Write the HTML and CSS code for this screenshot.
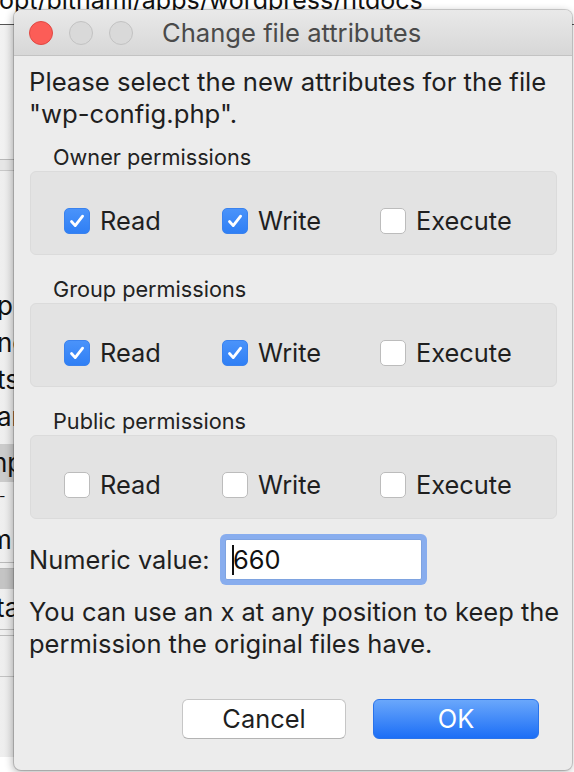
FILE: index.html
```html
<!DOCTYPE html>
<html>
<head>
<meta charset="utf-8">
<link rel="stylesheet" href="styles.css">
</head>
<body>
<div class="desktop">
  <div class="bgwin">
    <div class="bgpath">opt/bitnami/apps/wordpress/htdocs</div>
    <div class="bgside">
      <div class="sb-top"></div>
      <div class="sb-sep"></div>
      <div class="sb-gap"></div>
      <div class="sb-row">php</div>
      <div class="sb-row">nclude</div>
      <div class="sb-row">ts</div>
      <div class="sb-row sb-ar">ar</div>
      <div class="sb-row sb-sel">np</div>
      <div class="sb-row sb-tick">-</div>
      <div class="sb-row sb-m">m</div>
      <div class="sb-lines"></div>
      <div class="sb-band"></div>
      <div class="sb-row sb-ta">ta</div>
      <div class="sb-lines2"></div>
      <div class="sb-bottom"></div>
    </div>
  </div>

  <div class="dialog">
    <div class="titlebar">
      <span class="light red"></span>
      <span class="light"></span>
      <span class="light"></span>
      <span class="title">Change file attributes</span>
    </div>
    <div class="content">
      <p class="intro">Please select the new attributes for the file<br>"wp-config.php".</p>

      <div class="group">
        <div class="glabel">Owner permissions</div>
        <div class="gbox">
          <label class="check"><span class="cb on"><svg viewBox="0 0 26 26"><path d="M7.5 13.5 L11.2 17.6 L18.6 8.2"/></svg></span>Read</label>
          <label class="check"><span class="cb on"><svg viewBox="0 0 26 26"><path d="M7.5 13.5 L11.2 17.6 L18.6 8.2"/></svg></span>Write</label>
          <label class="check"><span class="cb"></span>Execute</label>
        </div>
      </div>

      <div class="group">
        <div class="glabel">Group permissions</div>
        <div class="gbox">
          <label class="check"><span class="cb on"><svg viewBox="0 0 26 26"><path d="M7.5 13.5 L11.2 17.6 L18.6 8.2"/></svg></span>Read</label>
          <label class="check"><span class="cb on"><svg viewBox="0 0 26 26"><path d="M7.5 13.5 L11.2 17.6 L18.6 8.2"/></svg></span>Write</label>
          <label class="check"><span class="cb"></span>Execute</label>
        </div>
      </div>

      <div class="group last">
        <div class="glabel">Public permissions</div>
        <div class="gbox">
          <label class="check"><span class="cb"></span>Read</label>
          <label class="check"><span class="cb"></span>Write</label>
          <label class="check"><span class="cb"></span>Execute</label>
        </div>
      </div>

      <div class="numeric">
        <span class="nlabel">Numeric value:</span>
        <div class="field"><span class="caret"></span>660</div>
      </div>

      <p class="hint">You can use an x at any position to keep the<br>permission the original files have.</p>

      <div class="buttons">
        <div class="btn cancel">Cancel</div>
        <div class="btn ok">OK</div>
      </div>
    </div>
  </div>
</div>
</body>
</html>
```

FILE: styles.css
```css
html, body {
  margin: 0;
  padding: 0;
}
body {
  width: 574px;
  height: 772px;
  overflow: hidden;
  background: #fff;
  font-family: Inter, "Noto Sans", "Liberation Sans", sans-serif;
  color: #1f1f1f;
}
.desktop {
  position: relative;
  width: 574px;
  height: 772px;
  overflow: hidden;
}

/* background window */
.bgwin {
  position: absolute;
  left: 0;
  top: 0;
  width: 574px;
  height: 772px;
}
.bgpath {
  height: 25px;
  box-sizing: border-box;
  border-bottom: 1px solid #555;
  font-size: 25px;
  line-height: 0;
  white-space: nowrap;
  color: #111;
  text-indent: -1px;
}
.bgside {
  width: 60px;
  display: flex;
  flex-direction: column;
  background: linear-gradient(to right, #efefef, #dedede);
}
.sb-top { height: 134px; background: linear-gradient(to right, #f2f2f2, #e0e0e0); }
.sb-sep { height: 10px; border-top: 1px solid #b8b8b8; border-bottom: 1px solid #c8c8c8; background: #e6e6e6; }
.sb-gap { height: 116px; }
.sb-row {
  height: 37px;
  font-size: 26px;
  line-height: 37px;
  color: #111;
  white-space: nowrap;
  text-indent: -3px;
}
.sb-ar { height: 47px; line-height: 40px; margin-top: -1px; }
.sb-sel { height: 38px; line-height: 38px; background: #cbcbcb; text-indent: -8px; }
.sb-tick { height: 35px; line-height: 28px; font-size: 14px; text-indent: -1px; }
.sb-m { height: 45px; line-height: 45px; text-indent: -11px; }
.sb-lines { height: 5px; border-top: 1px solid #b9b9b9; border-bottom: 1px solid #b9b9b9; }
.sb-band { height: 20px; background: #c4c4c4; }
.sb-ta { height: 40px; line-height: 38px; text-indent: -4px; }
.sb-lines2 { height: 5px; border-top: 1px solid #bbb; border-bottom: 1px solid #bbb; margin-bottom: 40px; }
.sb-bottom { height: 80px; border-top: 1px solid #c2c2c2; }

/* dialog */
.dialog {
  position: absolute;
  left: 14px;
  top: 10px;
  width: 558px;
  height: 760px;
  background: #ececec;
  border-radius: 7px;
  box-shadow: 0 0 0 1px rgba(0,0,0,0.16), -1px 2px 8px rgba(0,0,0,0.32);
  display: flex;
  flex-direction: column;
  overflow: hidden;
}
.titlebar {
  flex: none;
  height: 46px;
  box-sizing: border-box;
  background: linear-gradient(#e9e9e9, #d7d7d7);
  border-bottom: 1px solid #c3c3c3;
  display: flex;
  align-items: center;
  padding-left: 15px;
}
.light {
  width: 22px;
  height: 22px;
  border-radius: 50%;
  background: #d9d9d9;
  border: 1px solid #c2c2c2;
  margin-right: 16px;
  flex: none;
}
.light.red {
  background: #fc5d57;
  border-color: #e04843;
}
.title {
  margin-left: 13px;
  font-size: 25.6px;
  color: #4a4a4a;
  white-space: nowrap;
}
.content {
  padding: 10px 15px 0 16px;
}
.intro {
  margin: 0 0 14px -1px;
  font-size: 25.7px;
  line-height: 32px;
  white-space: nowrap;
}
.group {
  margin-bottom: 21px;
}
.group.last {
  margin-bottom: 0;
}
.glabel {
  padding-left: 23px;
  font-size: 21.7px;
  line-height: 26px;
  height: 26px;
  color: #222;
}
.gbox {
  margin-top: 1px;
  height: 84px;
  box-sizing: border-box;
  background: #e3e3e3;
  border: 1px solid #dbdbdb;
  border-radius: 6px;
  padding: 36px 0 0 33px;
  display: grid;
  grid-template-columns: 158px 158px 158px;
  align-items: start;
}
.check {
  display: flex;
  align-items: center;
  gap: 10px;
  font-size: 25.4px;
  line-height: 26px;
  height: 26px;
  color: #1f1f1f;
}
.cb {
  width: 26px;
  height: 26px;
  box-sizing: border-box;
  border-radius: 5px;
  background: #fff;
  border: 1px solid #bcbcbc;
  flex: none;
  display: flex;
}
.cb.on {
  background: linear-gradient(#4a93fa, #2f7ff5);
  border-color: #3a82ee;
}
.cb svg {
  width: 26px;
  height: 26px;
  margin: -1px;
}
.cb svg path {
  fill: none;
  stroke: #fff;
  stroke-width: 2.8;
  stroke-linecap: round;
  stroke-linejoin: round;
}
.numeric {
  margin-top: 20px;
  display: grid;
  grid-template-columns: 195px 197px;
  align-items: center;
}
.nlabel {
  margin-left: -1px;
  font-size: 25.4px;
  white-space: nowrap;
}
.field {
  height: 41px;
  box-sizing: border-box;
  background: #fff;
  border: 1px solid #7ea3e0;
  border-radius: 2px;
  box-shadow: 0 0 0 5px #88adee;
  font-size: 25.4px;
  line-height: 39px;
  padding-left: 6px;
  display: flex;
  align-items: center;
  color: #111;
}
.caret {
  width: 2px;
  height: 30px;
  background: #111;
  margin-right: -1px;
}
.hint {
  margin: 16px 0 0 -1px;
  font-size: 25.5px;
  line-height: 32px;
  white-space: nowrap;
}
.buttons {
  margin-top: 39px;
  display: flex;
  justify-content: flex-end;
  gap: 27px;
  padding-right: 18px;
}
.btn {
  height: 40px;
  box-sizing: border-box;
  border-radius: 6px;
  font-size: 25.4px;
  line-height: 38px;
  text-align: center;
}
.cancel {
  width: 164px;
  background: #fff;
  border: 1px solid #c6c6c6;
  border-bottom-color: #b3b3b3;
  color: #1f1f1f;
}
.ok {
  width: 166px;
  background: linear-gradient(#6aa7fb, #1c6ef6);
  border: 1px solid #2a73ea;
  color: #fff;
}
```
